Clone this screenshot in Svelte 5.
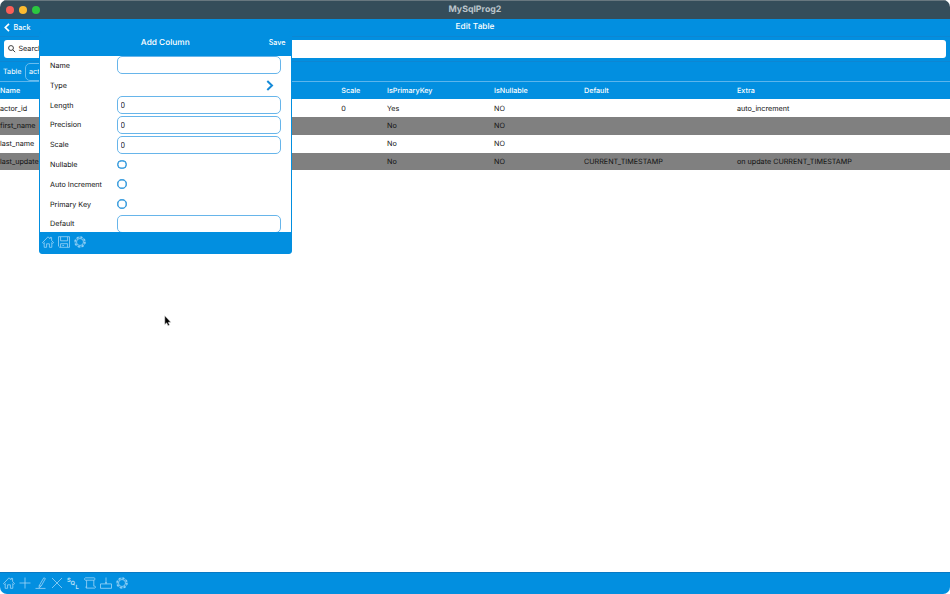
<script lang="ts">
    const headers = ["Name", "", "Scale", "IsPrimaryKey", "IsNullable", "Default", "Extra"];

    const rows = [
        ["actor_id", "", "0", "Yes", "NO", "", "auto_increment"],
        ["first_name", "", "", "No", "NO", "", ""],
        ["last_name", "", "", "No", "NO", "", ""],
        ["last_update", "", "", "No", "NO", "CURRENT_TIMESTAMP", "on update CURRENT_TIMESTAMP"],
    ];

    const tools = ["home", "add", "edit", "delete", "sql", "script", "export", "settings"];
    const popupTools = ["home", "save", "settings"];

    let fields = $state([
        { label: "Name", kind: "text", value: "" },
        { label: "Type", kind: "link", value: "" },
        { label: "Length", kind: "text", value: "0" },
        { label: "Precision", kind: "text", value: "0" },
        { label: "Scale", kind: "text", value: "0" },
        { label: "Nullable", kind: "check", value: "" },
        { label: "Auto Increment", kind: "check", value: "" },
        { label: "Primary Key", kind: "check", value: "" },
        { label: "Default", kind: "text", value: "" },
    ]);
</script>

{#snippet icon(name)}
    <svg class="icon" viewBox="0 0 12 12">
        {#if name === "home"}
            <path d="M.5 6.6 6 .8l2 2V1.4h1.6v3l1.9 2.2-.9.8-.8-.8v4.7H7.4V7.8H4.6v3.5H2.2V6.6l-.8.8z" />
        {:else if name === "add"}
            <path d="M6 .5v11M.5 6h11" />
        {:else if name === "edit"}
            <path d="M8.8.8 10.4 1.6 6 9.3 4 10.6 4.3 8.4zM.5 11.4h10M4.3 8.4 6 9.3" />
        {:else if name === "delete"}
            <path d="M1 1l10 10M11 1 1 11" />
        {:else if name === "sql"}
            <text x="0" y="5">S</text>
            <text x="3.6" y="8.2">Q</text>
            <text x="8.4" y="11.6">L</text>
        {:else if name === "script"}
            <path d="M2.6 3.2H1.2C.4 3.2.4.8 1.4.8h8.8c1 0 1 2.4 0 2.4H2.6v7.9h8.2c.9 0 .9-1.9 0-1.9H9.8v-6M2.6 11.1c-1 0-1-1.9 0-1.9" />
        {:else if name === "export"}
            <path d="M.5 6.9h11v4.4H.5zM6 .5v6.4M5 5.8h2" />
        {:else if name === "save"}
            <path d="M.5.7h11v10.6H1.7L.5 10.2zM2.6.8v4h7v-4M2.6 11.2V7.7h7v3.5M4.3 9.4h1.8" />
        {:else}
            <circle cx="6" cy="6" r="3.5" />
            <circle class="teeth" cx="6" cy="6" r="4.8" />
            <circle class="rim" cx="6" cy="6" r="5" />
        {/if}
    </svg>
{/snippet}

<div class="window">
    <header class="titlebar">
        <div class="lights">
            <span class="red"></span>
            <span class="yellow"></span>
            <span class="green"></span>
        </div>
        <h1>MySqlProg2</h1>
    </header>

    <nav class="navbar">
        <button class="back">
            <svg viewBox="0 0 6 9"><path d="M5 .8 1.3 4.5 5 8.2" /></svg>
            Back
        </button>
        <h2>Edit Table</h2>
    </nav>

    <div class="search">
        <div class="search-box">
            <svg viewBox="0 0 8 8"><circle cx="3.2" cy="3.2" r="2.6" /><path d="M5.1 5.1 7.6 7.6" /></svg>
            Search
        </div>
    </div>

    <div class="table-name">
        <span>Table</span>
        <div class="name-box">actor</div>
    </div>

    <div class="grid">
        <div class="row head">
            {#each headers as header}
                <span>{header}</span>
            {/each}
        </div>
        {#each rows as row}
            <div class="row">
                {#each row as cell}
                    <span>{cell}</span>
                {/each}
            </div>
        {/each}
    </div>

    <footer class="toolbar">
        {#each tools as tool}
            {@render icon(tool)}
        {/each}
    </footer>

    <div class="popup">
        <div class="popup-head">
            <h3>Add Column</h3>
            <button>Save</button>
        </div>
        <div class="popup-body">
            {#each fields as field}
                <div class="field">
                    <span class="label">{field.label}</span>
                    {#if field.kind === "text"}
                        <input bind:value={field.value} />
                    {:else if field.kind === "check"}
                        <span class="check"></span>
                    {:else}
                        <svg class="chevron" viewBox="0 0 8 11"><path d="M1.3 1 6 5.5 1.3 10" /></svg>
                    {/if}
                </div>
            {/each}
        </div>
        <div class="popup-foot">
            {#each popupTools as tool}
                {@render icon(tool)}
            {/each}
        </div>
    </div>

    <svg class="cursor" viewBox="0 0 8 12">
        <path d="M.8.8v8.7l1.9-1.7 1.3 3 1.5-.7-1.3-2.8h2.6z" />
    </svg>
</div>

<style>
    :global(body) {
        background: #fff;
    }

    .window {
        position: relative;
        box-sizing: border-box;
        display: flex;
        flex-direction: column;
        width: 950px;
        height: 594px;
        overflow: hidden;
        border-radius: 7px;
        background: #fff;
        color: #111;
        font-family: Inter, "Liberation Sans", sans-serif;
        font-size: 7.2px;
        font-weight: 430;
        line-height: 10px;
        text-rendering: geometricPrecision;
    }

    h1,
    h2,
    h3 {
        margin: 0;
        text-align: center;
    }

    button {
        padding: 0;
        border: none;
        background: none;
        color: #fff;
        font: inherit;
        font-weight: 500;
    }

    .titlebar {
        position: relative;
        box-sizing: border-box;
        height: 19px;
        border-top: 1px solid #68777f;
        background: #354d5a;
    }

    .titlebar h1 {
        color: #bac4ca;
        font-size: 8.8px;
        font-weight: 700;
        line-height: 17px;
    }

    .lights {
        position: absolute;
        top: 4.5px;
        left: 5.5px;
        display: flex;
        gap: 5px;
    }

    .lights span {
        width: 8px;
        height: 8px;
        border-radius: 50%;
    }

    .lights .red {
        background: #fb5e57;
    }

    .lights .yellow {
        background: #fcbb30;
    }

    .lights .green {
        background: #2bc840;
    }

    .navbar {
        position: relative;
        box-sizing: border-box;
        height: 18px;
        border-bottom: 1px solid #0d86d2;
        background: #028fe0;
    }

    .navbar h2 {
        color: #fff;
        font-size: 8.3px;
        font-weight: 500;
        line-height: 17px;
    }

    .back {
        position: absolute;
        top: 3px;
        left: 4px;
        display: flex;
        align-items: center;
        gap: 3.5px;
        line-height: 11px;
    }

    .back svg {
        width: 6px;
        height: 9px;
        fill: none;
        stroke: #fff;
        stroke-width: 1.7;
    }

    .search {
        box-sizing: border-box;
        height: 25px;
        padding: 3px 4px;
        border-bottom: 1px solid #0d86d2;
        background: #028fe0;
    }

    .search-box {
        display: flex;
        align-items: center;
        gap: 3px;
        height: 18px;
        padding-left: 4px;
        border-radius: 3px;
        background: #fff;
        line-height: 12px;
    }

    .search-box svg {
        width: 7.5px;
        height: 7.5px;
        fill: none;
        stroke: #222;
        stroke-width: 0.9;
    }

    .table-name {
        box-sizing: border-box;
        display: flex;
        align-items: center;
        gap: 4px;
        height: 19px;
        padding: 1px 0 0 3px;
        background: #028fe0;
        color: #fff;
    }

    .name-box {
        box-sizing: border-box;
        width: 110px;
        height: 18px;
        padding: 3px 2.5px;
        border: 1px solid #68bdf0;
        border-radius: 5px;
    }

    .grid {
        flex: 1;
    }

    .row {
        display: grid;
        grid-template-columns: 46px 295.3px 45.7px 107px 90px 153px 1fr;
        align-items: center;
        box-sizing: border-box;
        height: 17.75px;
        padding-top: 1px;
        white-space: nowrap;
    }

    .row:nth-child(odd):not(.head) {
        background: #808080;
    }

    .head {
        height: 18.3px;
        padding-top: 0.5px;
        border-top: 1px solid #5cb5ec;
        background: #028fe0;
        color: #fff;
        font-weight: 500;
    }

    .toolbar {
        box-sizing: border-box;
        display: flex;
        align-items: center;
        gap: 4.2px;
        height: 22px;
        padding: 0 0 1px 2.6px;
        border-top: 1px solid #0879c4;
        background: #028fe0;
    }

    .icon {
        width: 12px;
        height: 12px;
        overflow: visible;
        fill: none;
        stroke: #a9daf8;
        stroke-width: 0.75;
    }

    .icon text {
        fill: #c3e5fa;
        stroke: none;
        font-size: 5.8px;
        font-weight: 600;
    }

    .icon .teeth {
        stroke-width: 1.9;
        stroke-dasharray: 1.7 2.07;
        opacity: 0.75;
    }

    .icon .rim {
        stroke-width: 0.5;
    }

    .popup {
        position: absolute;
        top: 31px;
        left: 38.5px;
        box-sizing: border-box;
        width: 253.5px;
        height: 223px;
        display: flex;
        flex-direction: column;
        border: 1px solid #028fe0;
        border-radius: 3px;
        background: #028fe0;
        overflow: hidden;
    }

    .popup-head {
        position: relative;
        height: 23.5px;
        color: #fff;
    }

    .popup-head h3 {
        font-size: 8.3px;
        font-weight: 500;
        line-height: 23px;
    }

    .popup-head button {
        position: absolute;
        top: 6px;
        right: 5.5px;
    }

    .popup-body {
        height: 176.5px;
        background: #fff;
        overflow: hidden;
    }

    .field {
        display: flex;
        align-items: center;
        height: 19.8px;
        padding: 0 10.5px;
    }

    .label {
        width: 67px;
        padding-top: 1.2px;
        white-space: nowrap;
    }

    .field input {
        box-sizing: border-box;
        flex: 1;
        min-width: 0;
        height: 18px;
        padding: 1px 2.5px 0;
        border: 1px solid #67b5ea;
        border-radius: 5px;
        outline: none;
        background: #fff;
        color: #111;
        font: inherit;
    }

    .check {
        box-sizing: border-box;
        width: 9.5px;
        height: 9.5px;
        border: 1px solid #168bd8;
        border-radius: 50%;
        box-shadow: inset 0 0 0 0.4px #168bd8;
    }

    .chevron {
        width: 8px;
        height: 11px;
        margin: 1px 6.5px 0 auto;
        fill: none;
        stroke: #168bd8;
        stroke-width: 2;
    }

    .popup-foot {
        flex: 1;
        display: flex;
        align-items: center;
        gap: 4.2px;
        padding: 0 0 1px 2.2px;
    }

    .cursor {
        position: absolute;
        top: 315px;
        left: 164px;
        width: 8px;
        height: 12px;
        fill: #000;
        stroke: #ddd;
        stroke-width: 0.5;
    }
</style>
